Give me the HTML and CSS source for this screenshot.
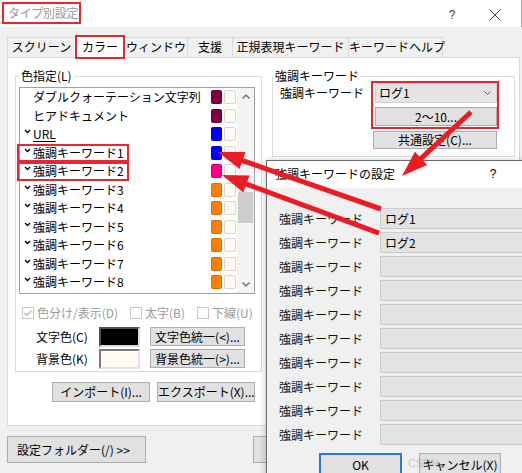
FILE: index.html
```html
<!DOCTYPE html>
<html lang="ja">
<head>
<meta charset="utf-8">
<title>タイプ別設定</title>
<link rel="stylesheet" href="styles.css">
</head>
<body>
<div class="window">
  <div class="titlebar">
    <span class="title">タイプ別設定</span>
    <span class="cap help">?</span>
    <span class="cap close"><svg width="12" height="12" viewBox="0 0 12 12"><path d="M0.5 0.5 L11.5 11.5 M11.5 0.5 L0.5 11.5" stroke="#444" stroke-width="1"/></svg></span>
  </div>
  <div class="client">
    <div class="tabs">
      <div class="tab t1">スクリーン</div>
      <div class="tab t2 active">カラー</div>
      <div class="tab t3">ウィンドウ</div>
      <div class="tab t4">支援</div>
      <div class="tab t5">正規表現キーワード</div>
      <div class="tab t6">キーワードヘルプ</div>
    </div>
    <div class="panel">
      <div class="col-left">
        <fieldset class="group g-color">
          <legend>色指定(L)</legend>
          <div class="listbox">
            <div class="rows">
              <div class="row"><span class="name"><span class="nochk"></span><span class="txt">ダブルクォーテーション文字列</span></span><span class="sw c-maroon"></span><span class="sw bgc"></span></div>
              <div class="row"><span class="name"><span class="nochk"></span><span class="txt">ヒアドキュメント</span></span><span class="sw c-maroon"></span><span class="sw bgc"></span></div>
              <div class="row"><span class="name"><svg class="chk" width="7" height="5" viewBox="0 0 7 5"><path d="M1 1 L3.5 3.5 L6 1" fill="none" stroke="#000" stroke-width="1.3"/></svg><span class="txt url">URL</span></span><span class="sw c-blue"></span><span class="sw bgc"></span></div>
              <div class="row"><span class="name hl"><svg class="chk" width="7" height="5" viewBox="0 0 7 5"><path d="M1 1 L3.5 3.5 L6 1" fill="none" stroke="#000" stroke-width="1.3"/></svg><span class="txt">強調キーワード1</span></span><span class="sw c-blue"></span><span class="sw bgc"></span></div>
              <div class="row"><span class="name hl"><svg class="chk" width="7" height="5" viewBox="0 0 7 5"><path d="M1 1 L3.5 3.5 L6 1" fill="none" stroke="#000" stroke-width="1.3"/></svg><span class="txt">強調キーワード2</span></span><span class="sw c-pink"></span><span class="sw bgc"></span></div>
              <div class="row"><span class="name"><svg class="chk" width="7" height="5" viewBox="0 0 7 5"><path d="M1 1 L3.5 3.5 L6 1" fill="none" stroke="#000" stroke-width="1.3"/></svg><span class="txt">強調キーワード3</span></span><span class="sw c-orange"></span><span class="sw bgc"></span></div>
              <div class="row"><span class="name"><svg class="chk" width="7" height="5" viewBox="0 0 7 5"><path d="M1 1 L3.5 3.5 L6 1" fill="none" stroke="#000" stroke-width="1.3"/></svg><span class="txt">強調キーワード4</span></span><span class="sw c-orange"></span><span class="sw bgc"></span></div>
              <div class="row"><span class="name"><svg class="chk" width="7" height="5" viewBox="0 0 7 5"><path d="M1 1 L3.5 3.5 L6 1" fill="none" stroke="#000" stroke-width="1.3"/></svg><span class="txt">強調キーワード5</span></span><span class="sw c-orange"></span><span class="sw bgc"></span></div>
              <div class="row"><span class="name"><svg class="chk" width="7" height="5" viewBox="0 0 7 5"><path d="M1 1 L3.5 3.5 L6 1" fill="none" stroke="#000" stroke-width="1.3"/></svg><span class="txt">強調キーワード6</span></span><span class="sw c-orange"></span><span class="sw bgc"></span></div>
              <div class="row"><span class="name"><svg class="chk" width="7" height="5" viewBox="0 0 7 5"><path d="M1 1 L3.5 3.5 L6 1" fill="none" stroke="#000" stroke-width="1.3"/></svg><span class="txt">強調キーワード7</span></span><span class="sw c-orange"></span><span class="sw bgc"></span></div>
              <div class="row"><span class="name"><svg class="chk" width="7" height="5" viewBox="0 0 7 5"><path d="M1 1 L3.5 3.5 L6 1" fill="none" stroke="#000" stroke-width="1.3"/></svg><span class="txt">強調キーワード8</span></span><span class="sw c-orange"></span><span class="sw bgc"></span></div>
            </div>
            <div class="vscroll">
              <div class="sb-btn"><svg width="8" height="5" viewBox="0 0 8 5"><path d="M0.5 4.5 L4 1 L7.5 4.5" fill="none" stroke="#606060" stroke-width="1.2"/></svg></div>
              <div class="sb-track"><div class="thumb"></div></div>
              <div class="sb-btn"><svg width="8" height="5" viewBox="0 0 8 5"><path d="M0.5 0.5 L4 4 L7.5 0.5" fill="none" stroke="#606060" stroke-width="1.2"/></svg></div>
            </div>
          </div>
          <div class="opts">
            <label class="opt o1"><span class="cb"><svg width="10" height="10" viewBox="0 0 10 10"><path d="M1.5 5 L4 7.5 L8.5 2.5" fill="none" stroke="#a8a8a8" stroke-width="1.1"/></svg></span>色分け/表示(D)</label>
            <label class="opt o2"><span class="cb"></span>太字(B)</label>
            <label class="opt o3"><span class="cb"></span>下線(U)</label>
          </div>
          <div class="colors">
            <span class="clabel">文字色(C)</span>
            <span class="cbox fg"></span>
            <button class="btn cbtn">文字色統一(&lt;)...</button>
            <span class="clabel">背景色(K)</span>
            <span class="cbox bgbox"></span>
            <button class="btn cbtn">背景色統一(&gt;)...</button>
          </div>
        </fieldset>
        <div class="io">
          <button class="btn iobtn">インポート(I)...</button>
          <button class="btn iobtn">エクスポート(X)...</button>
        </div>
      </div>
      <div class="col-right">
        <fieldset class="group g-kw">
          <legend>強調キーワード</legend>
          <div class="kw-row">
            <span class="kw-label">強調キーワード</span>
            <div class="kw-box">
              <div class="combo"><span>ログ1</span><svg width="7" height="4" viewBox="0 0 7 4"><path d="M0.5 0.5 L3.5 3.5 L6.5 0.5" fill="none" stroke="#606060" stroke-width="1"/></svg></div>
              <button class="btn range">2～10...</button>
            </div>
          </div>
          <button class="btn common">共通設定(C)...</button>
        </fieldset>
      </div>
    </div>
    <div class="footer">
      <button class="btn folder">設定フォルダー(/) &gt;&gt;</button>
      <button class="btn hidden-btn" aria-label="OK"></button>
    </div>
  </div>
</div>

<div class="dialog">
  <div class="dlg-title"><span>強調キーワードの設定</span><span class="dlg-help">?</span></div>
  <div class="dlg-body">
    <div class="kw-grid">
      <span class="dl">強調キーワード</span><span class="field">ログ1</span>
      <span class="dl">強調キーワード</span><span class="field">ログ2</span>
      <span class="dl">強調キーワード</span><span class="field"></span>
      <span class="dl">強調キーワード</span><span class="field"></span>
      <span class="dl">強調キーワード</span><span class="field"></span>
      <span class="dl">強調キーワード</span><span class="field"></span>
      <span class="dl">強調キーワード</span><span class="field"></span>
      <span class="dl">強調キーワード</span><span class="field"></span>
      <span class="dl">強調キーワード</span><span class="field"></span>
      <span class="dl">強調キーワード</span><span class="field"></span>
    </div>
    <div class="dlg-btns">
      <button class="btn ok">OK</button>
      <button class="btn cancel">キャンセル(X)</button>
    </div>
  </div>
</div>

<div class="watermark">CSDN @fanxiaoweiWork</div>

<svg class="arrows" width="522" height="473" viewBox="0 0 522 473">
  <polygon points="381.8,206.6 243.4,158.2 245.5,152.1 218,152 239.6,169.1 241.7,163.0 380.2,211.4" fill="#ec1c24"/>
  <polygon points="379.9,230.7 247.3,181.7 249.5,175.6 222,175 243.3,192.5 245.5,186.4 378.1,235.4" fill="#ec1c24"/>
  <polygon points="469.3,110.2 419.4,156.5 414.9,151.7 402,176 427.2,164.9 422.8,160.2 472.7,113.8" fill="#ec1c24"/>
</svg>
</body>
</html>
```

FILE: styles.css
```css
* { box-sizing: border-box; margin: 0; padding: 0; }
html, body { width: 522px; height: 473px; overflow: hidden; }
body {
  position: relative;
  background: #f0f0f0;
  font-family: "Noto Sans CJK JP", "Noto Sans", sans-serif;
  font-size: 12px;
  line-height: 16px;
  color: #000;
}
button { font-family: inherit; font-size: 12px; color: #000; }

.window { width: 522px; height: 473px; display: flex; flex-direction: column; }

/* title bar */
.titlebar {
  height: 27px; background: #fff; display: flex; align-items: flex-start;
  padding: 2px 0 0 2px; border-right: 1px solid #a8a8a8;
}
.title {
  border: 2px solid #e8262d; height: 22px; padding: 0 1px 0 4px;
  color: #9a9a9a; line-height: 18px; letter-spacing: -0.3px;
}
.cap { align-self: center; width: 20px; text-align: center; color: #444; }
.help { margin-left: auto; font-family: "Liberation Sans", sans-serif; font-size: 12px; line-height: 14px; }
.close { margin-left: 23px; margin-right: 16px; display: flex; justify-content: center; }

/* client */
.client { flex: 1; padding: 8px 2px 0 7px; display: flex; flex-direction: column; }

.tabs { display: flex; align-items: flex-end; height: 22px; }
.tab {
  height: 20px; border: 1px solid #d9d9d9; border-bottom: 0; margin-left: -1px;
  text-align: center; line-height: 18px; background: #f0f0f0; white-space: nowrap;
}
.t1 { margin-left: 0; width: 69px; }
.t2 { width: 50px; }
.t3 { width: 64px; }
.t4 { width: 46px; }
.t5 { width: 117px; }
.t6 { width: 95px; }
.tab.active {
  position: relative; z-index: 2; height: 24px; margin-bottom: -2px;
  border: 2px solid #e8262d; background: #fff; line-height: 20px;
}

.panel {
  height: 369px; background: #fff; border: 1px solid #d9d9d9;
  display: flex; gap: 10px; padding: 10px 4px 0 7px;
}
.col-left { width: 247px; display: flex; flex-direction: column; }
.col-right { flex: 1; }

fieldset.group { border: 1px solid #dcdcdc; padding: 0; margin: 0; min-width: 0; }
legend { font-size: 12px; line-height: 16px; padding: 0 2px; margin-left: 3px; }
.g-kw legend { margin-left: 1px; padding: 0 1px; }

/* list */
.listbox {
  margin: 3px 0 0 3px; width: 236px; height: 207px;
  display: flex; border: 1px solid #a0a0a0; background: #fff;
}
.rows { width: 217px; }
.row { height: 18.5px; display: flex; align-items: center; }
.name {
  display: flex; align-items: center; height: 100%;
  margin-left: -3px; padding: 0 3px 0 5px; border: 2px solid transparent;
}
.name.hl { border-color: #e8262d; }
.chk { align-self: flex-start; margin-top: 2px; margin-right: 2px; flex: none; }
.nochk { width: 7px; margin-right: 2px; flex: none; }
.txt { line-height: 14px; white-space: nowrap; }
.url { text-decoration: underline; text-underline-offset: 2px; }
.sw { width: 11px; height: 14px; border-radius: 2px; margin-left: auto; border: 1px solid rgba(0,0,0,0.15); flex: none; }
.sw + .sw { margin-left: 2px; margin-right: 1px; width: 12px; }
.bgc { background: #fffaf0; border-color: #d6d6d6; }
.c-maroon { background: #800040; }
.c-blue { background: #0000ff; }
.c-pink { background: #ff0080; }
.c-orange { background: #ff8000; }

.vscroll { width: 17px; display: flex; flex-direction: column; background: #f4f4f4; }
.sb-btn { height: 17px; display: flex; align-items: center; justify-content: center; }
.sb-track { flex: 1; }
.thumb { margin: 87px 1px 0; height: 31px; background: #cdcdcd; }

/* options */
.opts { display: flex; margin-top: 11px; height: 16px; padding-left: 6px; }
.opt { display: flex; align-items: center; gap: 3px; color: #9b9b9b; white-space: nowrap; }
.o1 { width: 108px; }
.o2 { width: 67px; }
.cb {
  width: 12px; height: 12px; border: 1px solid #c8c8c8; background: #fff;
  display: flex; align-items: center; justify-content: center; flex: none;
}

.colors {
  display: grid; grid-template-columns: 63px 41px 105px; grid-auto-rows: 21px; row-gap: 1px;
  margin-top: 5px; padding: 0 0 2px 20px; align-items: center;
}
.clabel { white-space: nowrap; }
.cbox { height: 20px; border: 2px solid; border-color: #7a7a7a #e3e3e3 #e3e3e3 #7a7a7a; }
.cbox.fg { background: #000; border-color: #505050 #dcdcdc #dcdcdc #505050; }
.cbox.bgbox { background: #fffaf0; box-shadow: inset 1px 1px 0 #fff; }
.btn { background: #e1e1e1; border: 1px solid #adadad; text-align: center; white-space: nowrap; line-height: 16px; }
.cbtn { margin-left: 10px; width: 95px; height: 19px; }

.io { display: flex; justify-content: flex-end; gap: 7px; margin-top: 10px; padding-right: 7px; }
.iobtn { width: 98px; height: 20px; }

/* right group */
.kw-row { display: flex; margin-top: -3px; }
.kw-label { width: 98px; padding-left: 7px; margin-top: 2px; line-height: 20px; white-space: nowrap; }
.kw-box {
  border: 2px solid #e8262d; width: 128px; padding: 0 0 1px 2px;
  display: flex; flex-direction: column; gap: 4px;
}
.combo {
  height: 20px; background: #e5e5e5; border: 1px solid #d0d0d0;
  display: flex; align-items: center; justify-content: space-between; padding: 0 5px 0 3px;
}
.range { height: 19px; }
.common { display: block; margin: 2px 0 7px 100px; width: 124px; height: 18px; }

/* footer */
.footer { display: flex; margin-top: 10px; }
.folder { width: 139px; height: 27px; text-align: left; padding-left: 9px; }
.hidden-btn { margin-left: 107px; width: 90px; height: 27px; }

/* dialog */
.dialog {
  position: absolute; left: 266px; top: 160px; width: 262px; height: 320px;
  background: #f0f0f0; border: 1px solid #6d6d6d; z-index: 5;
  box-shadow: -1px 0 6px rgba(0,0,0,0.2);
}
.dlg-title {
  height: 27px; background: #fff; display: flex; align-items: center;
  padding: 0 0 2px 8px;
}
.dlg-help { margin-left: auto; margin-right: 24px; width: 20px; text-align: center; font-family: "Liberation Sans", sans-serif; }
.dlg-body { padding: 20px 0 0 12px; }
.kw-grid { display: grid; grid-template-columns: 101px 160px; grid-auto-rows: 21px; row-gap: 3px; align-items: center; }
.dl { white-space: nowrap; color: #111; }
.field {
  height: 21px; background: #e3e3e3; border: 1px solid #cccccc;
  padding-left: 4px; line-height: 19px;
}
.dlg-btns { display: flex; margin-top: 8px; padding-left: 40px; }
.ok { width: 83px; height: 24px; border: 2px solid #2a7bd6; line-height: 18px; }
.cancel { margin-left: 17px; width: 82px; height: 24px; line-height: 18px; }

.watermark {
  position: absolute; left: 408px; top: 456px; z-index: 6;
  font-family: "Liberation Sans", sans-serif; font-size: 11px; line-height: 14px;
  color: rgba(140,140,140,0.45); letter-spacing: -0.2px;
}

.arrows { position: absolute; left: 0; top: 0; z-index: 10; pointer-events: none; }
```
